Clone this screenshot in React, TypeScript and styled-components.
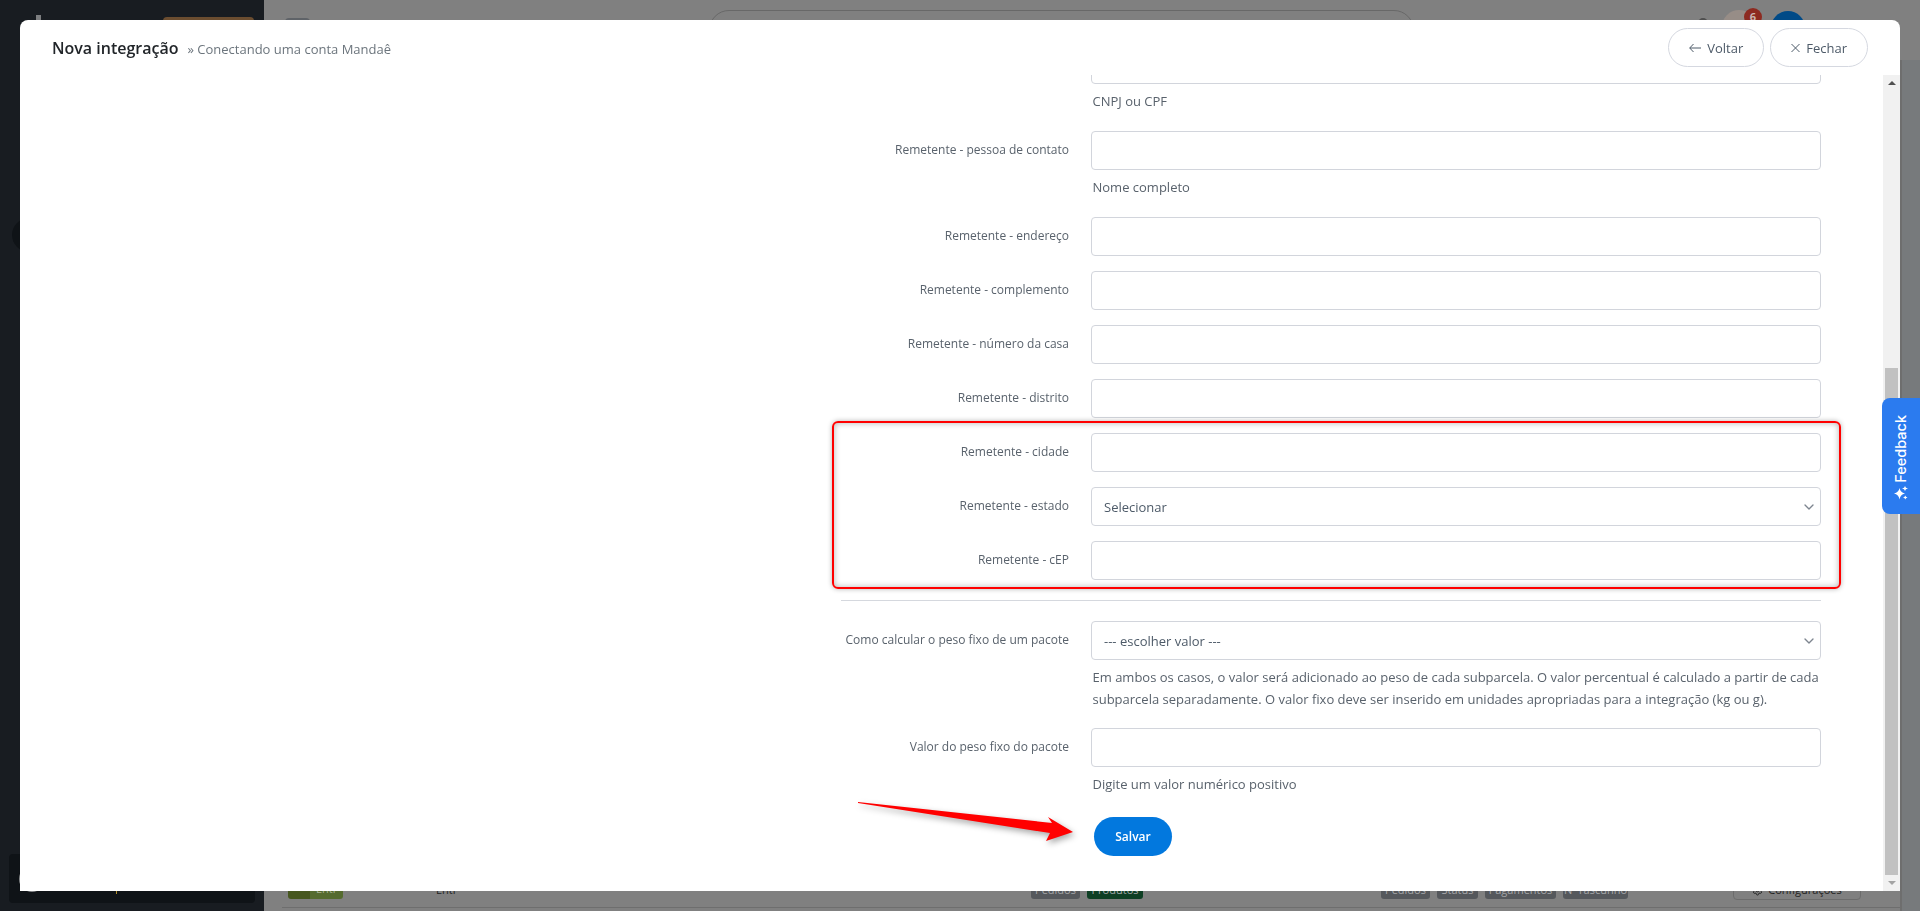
import React from "react";
import styled, { createGlobalStyle } from "styled-components";
import { ChevronDown, Settings } from "lucide-react";

const GlobalStyle = createGlobalStyle`
  * { box-sizing: border-box; }
  html, body { margin: 0; padding: 0; height: 100%; overflow: hidden; }
  body { font-family: "Open Sans", "Liberation Sans", sans-serif; background: #808080; }
`;

const Page = styled.div`
  display: flex;
  width: 1920px;
  height: 911px;
  overflow: hidden;
`;

/* ---------- dimmed application behind the modal ---------- */
const Sidebar = styled.aside`
  width: 264px;
  flex: none;
  background: #181c21;
  display: flex;
  flex-direction: column;
`;
const SideTop = styled.div`
  display: flex;
  align-items: flex-start;
  padding: 15px 10px 0 36px;
  justify-content: space-between;
  height: 218px;
`;
const LogoStem = styled.div`
  width: 5px;
  height: 20px;
  background: #7c7e80;
`;
const BrownButton = styled.div`
  width: 91px;
  height: 30px;
  margin-top: 2px;
  background: #6b4d30;
  border-radius: 4px;
`;
const Collapse = styled.div`
  width: 34px;
  height: 34px;
  margin-left: 12px;
  border-radius: 50%;
  background: #0f1317;
`;
const UserBlock = styled.div`
  margin: auto 9px 8px;
  height: 49px;
  background: #0f1317;
  border-radius: 4px;
  display: flex;
  align-items: center;
  padding-left: 10px;
`;
const UserRing = styled.div`
  width: 26px;
  height: 26px;
  border: 2px solid #8a8c8e;
  border-radius: 50%;
`;
const UserMark = styled.span`
  width: 1px;
  height: 4px;
  margin: 0 0 9px 71px;
  align-self: flex-end;
  background: #b08d2a;
`;
const Main = styled.main`
  flex: 1;
  min-width: 0;
  display: flex;
  flex-direction: column;
  background: #808080;
`;
const TopBar = styled.header`
  height: 60px;
  flex: none;
  display: flex;
  align-items: flex-start;
  padding-left: 21px;
`;
const TopIcon = styled.div`
  width: 25px;
  height: 30px;
  margin-top: 18px;
  border-radius: 4px;
  background: #5f6368;
`;
const SearchPill = styled.div`
  width: 705px;
  height: 40px;
  margin: 10px 0 0 399px;
  border: 1px solid #686868;
  border-radius: 20px;
`;
const Bell = styled.div`
  width: 10px;
  height: 10px;
  margin: 18px 0 0 284px;
  border-radius: 50%;
  background: #4f4f4f;
`;
const UserPhoto = styled.div`
  position: relative;
  width: 34px;
  height: 34px;
  margin: 10px 0 0 14px;
  border-radius: 50%;
  background: #978d87;
`;
const Badge = styled.span`
  position: absolute;
  top: -2px;
  left: 22px;
  width: 18px;
  height: 18px;
  border-radius: 50%;
  background: #8d2a20;
  color: #c9b3ae;
  font-size: 11px;
  font-weight: 700;
  line-height: 18px;
  text-align: center;
`;
const Avatar = styled.div`
  width: 34px;
  height: 34px;
  margin: 11px 0 0 15px;
  border-radius: 50%;
  background: #004a87;
`;
const Workspace = styled.div`
  flex: 1;
  display: flex;
`;
const WorkspaceMain = styled.div`
  flex: 1;
  min-width: 0;
  display: flex;
  flex-direction: column;
  justify-content: flex-end;
  padding-left: 18px;
`;
const PageScrollbar = styled.div`
  width: 20px;
  flex: none;
  background: #777a7c;
  border-left: 2px solid #6e6e6e;
`;
const BottomRow = styled.div`
  height: 28px;
  margin-bottom: 3px;
  padding-left: 6px;
  border-bottom: 1px solid #6e6e6e;
  display: flex;
  align-items: flex-start;
`;
const Cell = styled.div<{ $w?: number }>`
  width: ${(p) => (p.$w ? `${p.$w}px` : "auto")};
  display: flex;
  align-items: flex-start;
  gap: 7px;
  font-size: 11px;
`;
const TypeChip = styled.div`
  width: 55px;
  height: 19px;
  border-radius: 3px;
  background: linear-gradient(90deg, #47571f 40%, #556b2f 40%);
  color: #a9b393;
  line-height: 17px;
  padding-left: 28px;
`;
const RowName = styled.span`
  margin-left: 86px;
  color: #222;
  line-height: 20px;
`;
const Chip = styled.span<{ $w: number; $green?: boolean }>`
  width: ${(p) => p.$w}px;
  height: 19px;
  border-radius: 3px;
  background: ${(p) => (p.$green ? "#0e3f24" : "#55585c")};
  color: #a5a7a9;
  line-height: 19px;
  text-align: center;
  white-space: nowrap;
  overflow: hidden;
`;
const OutlineBtn = styled.div`
  width: 128px;
  height: 20px;
  border: 1px solid #6c6c6c;
  border-radius: 4px;
  color: #222;
  line-height: 18px;
  display: flex;
  align-items: center;
  justify-content: center;
  gap: 5px;
  overflow: hidden;
`;
const Trash = styled.div`
  width: 10px;
  height: 10px;
  margin: 0 0 0 15px;
  border: 1px solid #333;
  border-radius: 2px;
`;

/* ---------- modal ---------- */
const Modal = styled.section`
  position: fixed;
  top: 20px;
  left: 20px;
  right: 20px;
  bottom: 20px;
  background: #fff;
  border-radius: 8px 8px 0 0;
  display: flex;
  flex-direction: column;
  overflow: hidden;
`;
const ModalHeader = styled.div`
  height: 55px;
  flex: none;
  padding: 8px 32px 0;
  display: flex;
  align-items: flex-start;
  justify-content: space-between;
`;
const TitleGroup = styled.div`
  display: flex;
  align-items: baseline;
  gap: 9px;
  padding-top: 8px;
`;
const Title = styled.h1`
  margin: 0;
  font-size: 16px;
  font-weight: 600;
  color: #212529;
  line-height: 24px;
`;
const Subtitle = styled.span`
  font-size: 13px;
  color: #6c757d;
`;
const HeaderActions = styled.div`
  display: flex;
  gap: 6px;
`;
const GhostButton = styled.button`
  height: 39px;
  padding: 0 20px;
  border: 1px solid #d5d8e0;
  border-radius: 20px;
  background: #fff;
  color: #4d5a68;
  font: 400 13px "Open Sans", sans-serif;
  display: inline-flex;
  align-items: center;
  gap: 6px;
`;
const ModalBody = styled.div`
  flex: 1;
  min-height: 0;
  display: flex;
`;
const ScrollArea = styled.div`
  flex: 1;
  min-width: 0;
  overflow: hidden;
  padding-left: 821px;
`;
const Form = styled.form`
  width: 980px;
  margin-top: -30px;
  display: flex;
  flex-direction: column;
  gap: 15px;
`;
const Row = styled.div`
  display: grid;
  grid-template-columns: 228px 730px;
  column-gap: 22px;
`;
const Label = styled.label`
  height: 39px;
  line-height: 37px;
  text-align: right;
  font-size: 12px;
  color: #59626c;
  white-space: nowrap;
`;
const Field = styled.div`
  position: relative;
  min-width: 0;
`;
const Input = styled.input`
  display: block;
  width: 100%;
  height: 39px;
  padding: 0 12px;
  border: 1px solid #d2d5dc;
  border-radius: 4px;
  background: #fff;
  font: 400 13px "Open Sans", sans-serif;
  color: #4d5a68;
`;
const Select = styled.select`
  display: block;
  width: 100%;
  height: 39px;
  padding: 0 12px;
  border: 1px solid #d2d5dc;
  border-radius: 4px;
  background: #fff;
  font: 400 13px "Open Sans", sans-serif;
  color: #4d5a68;
  appearance: none;
`;
const Chevron = styled(ChevronDown)`
  position: absolute;
  top: 12px;
  right: 4px;
  color: #7d858f;
`;
const Hint = styled.div<{ $long?: boolean }>`
  margin: 6px 0 0;
  padding: 0 0 ${(p) => (p.$long ? 3 : 4)}px 1.5px;
  font-size: 13px;
  line-height: 22px;
  color: #59626c;
`;
const HighlightGroup = styled.div`
  position: relative;
  display: flex;
  flex-direction: column;
  gap: 15px;
  &::before {
    content: "";
    position: absolute;
    top: -12px;
    bottom: -9px;
    left: -9px;
    right: -20px;
    border: 2px solid #ff0000;
    border-radius: 6px;
    pointer-events: none;
    box-shadow: 0 0 5px rgba(0, 0, 0, 0.3), inset 0 0 6px rgba(0, 0, 0, 0.3);
  }
`;
const Divider = styled.hr`
  width: 100%;
  margin: 5px 0;
  border: 0;
  border-top: 1px solid #d5d8de;
`;
const SaveRow = styled.div`
  padding-left: 253px;
  margin-top: 3px;
`;
const SaveButton = styled.button`
  width: 78px;
  height: 39px;
  border: 0;
  border-radius: 20px;
  background: #0278de;
  color: #fff;
  font: 600 12px "Open Sans", sans-serif;
`;
const ScrollTrack = styled.div`
  width: 17px;
  flex: none;
  background: #f1f1f1;
  display: flex;
  flex-direction: column;
  align-items: center;
`;
const ScrollArrow = styled.span<{ $down?: boolean }>`
  flex: none;
  width: 0;
  height: 0;
  margin: 6px 0;
  border-left: 4px solid transparent;
  border-right: 4px solid transparent;
  ${(p) => (p.$down ? "border-top: 4px solid #a3a3a3;" : "border-bottom: 4px solid #505050;")}
`;
const ScrollThumb = styled.div`
  width: 13px;
  flex: none;
  height: 507px;
  margin-top: auto;
  background: #c1c1c1;
`;

/* ---------- overlays ---------- */
const Feedback = styled.div`
  position: fixed;
  top: 398px;
  right: 0;
  width: 38px;
  height: 116px;
  padding: 17px 0 14px;
  border-radius: 8px 0 0 8px;
  background: #2b7bef;
  color: #fff;
  display: flex;
  flex-direction: column;
  align-items: center;
  justify-content: space-between;
`;
const FeedbackText = styled.span`
  writing-mode: vertical-rl;
  transform: rotate(180deg);
  font: 500 14.5px Inter, "Liberation Sans", sans-serif;
  line-height: 16px;
`;
const ArrowMark = styled.svg`
  position: fixed;
  left: 850px;
  top: 795px;
  width: 235px;
  height: 55px;
  pointer-events: none;
  filter: drop-shadow(2px 3px 3px rgba(0, 0, 0, 0.35));
`;

const SparkleIcon = () => (
  <svg width="14" height="14" viewBox="0 0 14 14" fill="currentColor">
    <path d="M5.5 2 Q6.2 6.3 11 7.5 Q6.2 8.7 5.5 13.5 Q4.8 8.7 0 7.5 Q4.8 6.3 5.5 2 Z" />
    <path d="M11 0 Q11.4 2.1 14 2.5 Q11.4 2.9 11 5 Q10.6 2.9 8 2.5 Q10.6 2.1 11 0 Z" />
    <path d="M11.3 9.6 Q11.6 11.1 13.5 11.5 Q11.6 11.9 11.3 13.5 Q11 11.9 9.1 11.5 Q11 11.1 11.3 9.6 Z" />
  </svg>
);

const BackIcon = () => (
  <svg width="12" height="10" viewBox="0 0 12 10" fill="none" stroke="currentColor" strokeWidth="1">
    <path d="M12 5 H0.8 M4.5 1 L0.7 5 L4.5 9" />
  </svg>
);

const CloseIcon = () => (
  <svg width="9" height="10" viewBox="0 0 9 10" fill="none" stroke="currentColor" strokeWidth="1">
    <path d="M0.5 1 L8.5 9 M8.5 1 L0.5 9" />
  </svg>
);

const TextRow = ({ label, hint }: { label?: string; hint?: string }) => (
  <Row>
    <Label>{label}</Label>
    <Field>
      <Input type="text" />
      {hint && <Hint>{hint}</Hint>}
    </Field>
  </Row>
);

const SelectRow = ({ label, value, hint }: { label: string; value: string; hint?: string }) => (
  <Row>
    <Label>{label}</Label>
    <Field>
      <Select defaultValue={value}>
        <option>{value}</option>
      </Select>
      <Chevron size={16} strokeWidth={2} />
      {hint && <Hint $long>{hint}</Hint>}
    </Field>
  </Row>
);

export default function App() {
  return (
    <>
      <GlobalStyle />
      <Page>
        <Sidebar>
          <SideTop>
            <LogoStem />
            <BrownButton />
          </SideTop>
          <Collapse />
          <UserBlock>
            <UserRing />
            <UserMark />
          </UserBlock>
        </Sidebar>
        <Main>
          <TopBar>
            <TopIcon />
            <SearchPill />
            <Bell />
            <UserPhoto>
              <Badge>6</Badge>
            </UserPhoto>
            <Avatar />
          </TopBar>
          <Workspace>
            <WorkspaceMain>
              <BottomRow>
                <Cell $w={743}>
                  <TypeChip>Entr</TypeChip>
                  <RowName>Entr</RowName>
                </Cell>
                <Cell $w={350}>
                  <Chip $w={49}>Pedidos</Chip>
                  <Chip $w={56} $green>Produtos</Chip>
                </Cell>
                <Cell $w={352}>
                  <Chip $w={49}>Pedidos</Chip>
                  <Chip $w={41}>Status</Chip>
                  <Chip $w={71}>Pagamentos</Chip>
                  <Chip $w={65}>Nº rascunho</Chip>
                </Cell>
                <Cell>
                  <OutlineBtn>
                    <Settings size={11} />
                    Configurações
                  </OutlineBtn>
                  <Trash />
                </Cell>
              </BottomRow>
            </WorkspaceMain>
            <PageScrollbar />
          </Workspace>
        </Main>
      </Page>

      <Modal>
        <ModalHeader>
          <TitleGroup>
            <Title>Nova integração</Title>
            <Subtitle>» Conectando uma conta Mandaê</Subtitle>
          </TitleGroup>
          <HeaderActions>
            <GhostButton type="button">
              <BackIcon />
              Voltar
            </GhostButton>
            <GhostButton type="button">
              <CloseIcon />
              Fechar
            </GhostButton>
          </HeaderActions>
        </ModalHeader>
        <ModalBody>
          <ScrollArea>
            <Form>
              <TextRow hint="CNPJ ou CPF" />
              <TextRow label="Remetente - pessoa de contato" hint="Nome completo" />
              <TextRow label="Remetente - endereço" />
              <TextRow label="Remetente - complemento" />
              <TextRow label="Remetente - número da casa" />
              <TextRow label="Remetente - distrito" />
              <HighlightGroup>
                <TextRow label="Remetente - cidade" />
                <SelectRow label="Remetente - estado" value="Selecionar" />
                <TextRow label="Remetente - cEP" />
              </HighlightGroup>
              <Divider />
              <SelectRow
                label="Como calcular o peso fixo de um pacote"
                value="--- escolher valor ---"
                hint="Em ambos os casos, o valor será adicionado ao peso de cada subparcela. O valor percentual é calculado a partir de cada subparcela separadamente. O valor fixo deve ser inserido em unidades apropriadas para a integração (kg ou g)."
              />
              <TextRow label="Valor do peso fixo do pacote" hint="Digite um valor numérico positivo" />
              <SaveRow>
                <SaveButton type="button">Salvar</SaveButton>
              </SaveRow>
            </Form>
          </ScrollArea>
          <ScrollTrack>
            <ScrollArrow />
            <ScrollThumb />
            <ScrollArrow $down />
          </ScrollTrack>
        </ModalBody>
      </Modal>

      <Feedback>
        <FeedbackText>Feedback</FeedbackText>
        <SparkleIcon />
      </Feedback>

      <ArrowMark viewBox="0 0 235 55">
        <polygon points="8,7 202,28 198,22 223,37 196,46 200,38 8,8" fill="#ff0000" />
      </ArrowMark>
    </>
  );
}
